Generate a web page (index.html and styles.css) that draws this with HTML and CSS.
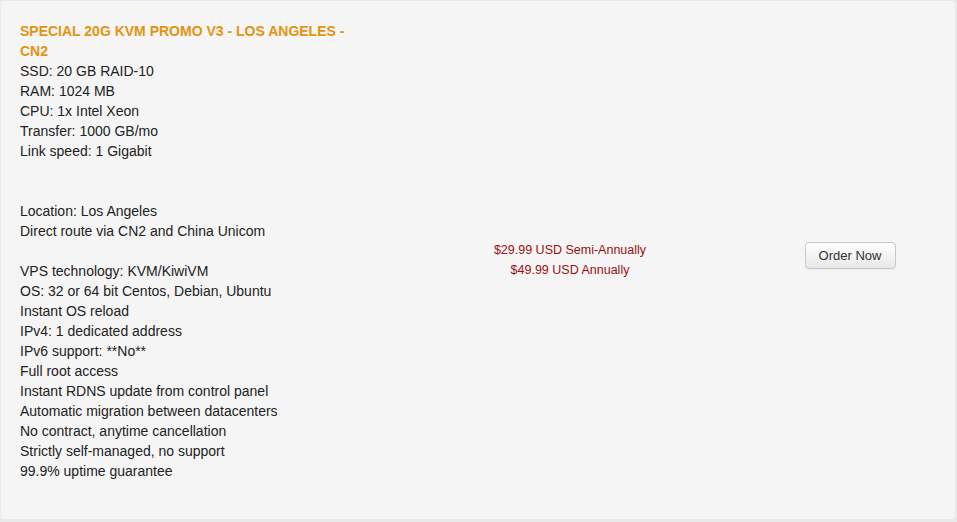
FILE: index.html
```html
<!DOCTYPE html>
<html>
<head>
<meta charset="utf-8">
<link rel="stylesheet" href="styles.css">
</head>
<body>
<div class="panel">
  <div class="row">
    <div class="desc">
      <div class="title">SPECIAL 20G KVM PROMO V3 - LOS ANGELES - CN2</div>
      <div>SSD: 20 GB RAID-10</div>
      <div>RAM: 1024 MB</div>
      <div>CPU: 1x Intel Xeon</div>
      <div>Transfer: 1000 GB/mo</div>
      <div>Link speed: 1 Gigabit</div>
      <div class="blank"></div>
      <div class="blank"></div>
      <div>Location: Los Angeles</div>
      <div>Direct route via CN2 and China Unicom</div>
      <div class="blank"></div>
      <div>VPS technology: KVM/KiwiVM</div>
      <div>OS: 32 or 64 bit Centos, Debian, Ubuntu</div>
      <div>Instant OS reload</div>
      <div>IPv4: 1 dedicated address</div>
      <div>IPv6 support: **No**</div>
      <div>Full root access</div>
      <div>Instant RDNS update from control panel</div>
      <div>Automatic migration between datacenters</div>
      <div>No contract, anytime cancellation</div>
      <div>Strictly self-managed, no support</div>
      <div>99.9% uptime guarantee</div>
    </div>
    <div class="prices">
      <div>$29.99 USD Semi-Annually</div>
      <div>$49.99 USD Annually</div>
    </div>
    <div class="action">
      <button class="btn">Order Now</button>
    </div>
  </div>
</div>
</body>
</html>
```
FILE: styles.css
```css
html, body {
  margin: 0;
  padding: 0;
  background: #e9e9e9;
  font-family: "Liberation Sans", Arial, sans-serif;
}
body {
  padding: 1px 2px 2px 1px;
}
.panel {
  background: #f5f5f5;
  border-radius: 4px;
  height: 518px;
  box-sizing: border-box;
  padding: 20px 19px 0 19px;
}
.row {
  display: grid;
  grid-template-columns: 330px 440px 120px;
  align-items: center;
}
.desc {
  font-size: 14px;
  line-height: 20px;
  color: #222;
}
.title {
  color: #e4930f;
  font-weight: bold;
}
.blank {
  height: 20px;
}
.prices {
  text-align: center;
  font-size: 12.5px;
  line-height: 20px;
  color: #9a1010;
  padding-top: 18px;
}
.action {
  text-align: center;
  padding-top: 8px;
}
.btn {
  font-family: "Liberation Sans", Arial, sans-serif;
  font-size: 13px;
  color: #333;
  width: 91px;
  height: 27px;
  border: 1px solid #c8c8c8;
  border-radius: 4px;
  background: linear-gradient(#ffffff, #e8e8e8);
  box-shadow: 0 1px 1px rgba(0,0,0,0.05);
  padding: 0;
  cursor: pointer;
}
```
